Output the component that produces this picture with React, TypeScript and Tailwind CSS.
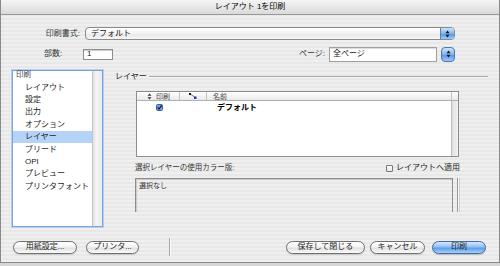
import React from "react";

function Arrows() {
  return (
    <svg width="5" height="8" viewBox="0 0 5 8">
      <path d="M0.5 3.2 L2.5 0.6 L4.5 3.2 Z" fill="#111" />
      <path d="M0.5 4.8 L2.5 7.4 L4.5 4.8 Z" fill="#111" />
    </svg>
  );
}

function Btn({ w, children, blue }: { w: string; children: React.ReactNode; blue?: boolean }) {
  return (
    <div
      className={
        blue
          ? "h-[13px] rounded-full border border-[#3f6aa3] bg-[linear-gradient(#d6e9fd,#90c0f5_45%,#5c9de9_55%,#a7d1fb)] flex items-center justify-center shadow-[0_1px_1px_rgba(0,0,0,0.2)] " + w
          : "h-[13px] rounded-full border border-[#6f6f6f] bg-[linear-gradient(#ffffff,#f4f4f4_45%,#e1e1e1_55%,#fbfbfb)] flex items-center justify-center shadow-[0_1px_1px_rgba(0,0,0,0.15)] " + w
      }
    >
      {children}
    </div>
  );
}

export default function App() {
  const items = ["レイアウト", "設定", "出力", "オプション", "レイヤー", "ブリード", "OPI", "プレビュー", "プリンタフォント"];
  return (
    <div className="w-[500px] h-[266px] bg-[#d6d6d6] font-['Liberation_Sans','Noto_Sans_CJK_JP',sans-serif] text-[8px] leading-none text-[#1c1c1c]">
      <div className="w-[500px] h-[263px] flex flex-col border-x border-b border-[#8a8a8a] bg-[repeating-linear-gradient(180deg,#efefef_0px,#efefef_2px,#e8e8e8_2px,#e8e8e8_4px)]">
        {/* title bar */}
        <div className="h-[15px] shrink-0 flex items-center justify-center border-b border-[#989898] bg-[linear-gradient(#f4f4f4,#dadada)] text-black">
          レイアウト 1を印刷
        </div>

        {/* row 1 */}
        <div className="flex items-center mt-[12px] h-[13px]">
          <div className="w-[79px] text-right text-[#333]">印刷書式:</div>
          <div className="ml-[5px] w-[370px] h-[13px] flex items-center rounded-[4px] border border-[#8a8a8a] bg-[linear-gradient(#ffffff,#f3f3f3_50%,#e6e6e6_51%,#f7f7f7)] overflow-hidden">
            <div className="flex-1 pl-[5px] text-[#111]">デフォルト</div>
            <div className="w-[14px] h-full border-l border-[#5a7fb2] bg-[linear-gradient(#cfe4fc,#7fb3f0_50%,#4f92e6_51%,#9fcbf8)] flex items-center justify-center">
              <Arrows />
            </div>
          </div>
        </div>

        {/* row 2 */}
        <div className="flex items-center mt-[6px] h-[16px]">
          <div className="ml-[43px] w-[39px] text-[#333]">部数:</div>
          <div className="w-[30px] h-[11px] border border-[#8c8c8c] bg-white pl-[3px] flex items-center shadow-[inset_0_1px_1px_rgba(0,0,0,0.2)]">1</div>
          <div className="flex-1" />
          <div className="text-[#333]">ページ:</div>
          <div className="ml-[4px] w-[108px] h-[15px] border border-[#a0a0a0] bg-white pl-[3px] pt-[2px] shadow-[inset_0_1px_1px_rgba(0,0,0,0.15)]">全ページ</div>
          <div className="ml-[4px] mr-[44px] w-[14px] h-[15px] rounded-[4px] border border-[#4f76ad] bg-[linear-gradient(#cfe4fc,#7fb3f0_50%,#4f92e6_51%,#9fcbf8)] flex items-center justify-center">
            <Arrows />
          </div>
        </div>

        {/* main */}
        <div className="flex mt-[8px] h-[157px]">
          {/* list */}
          <div className="ml-[11px] w-[91px] h-full border border-[#7aa3da] shadow-[0_0_0_1px_#b3cff2] flex bg-white">
            <div className="flex-1 flex flex-col -mt-[2px]">
              <div className="h-[12.4px] flex items-center pl-[3px] text-[7.5px] text-[#444]">印刷</div>
              {items.map((t) => (
                <div
                  key={t}
                  className={
                    t === "レイヤー"
                      ? "h-[12.4px] flex items-center pl-[12px] bg-[#b5d3f7]"
                      : "h-[12.4px] flex items-center pl-[12px]"
                  }
                >
                  {t}
                </div>
              ))}
            </div>
            <div className="w-[10px] h-full border-l border-[#c4c4c4] bg-[linear-gradient(90deg,#e2e2e2,#f4f4f4_40%,#ebebeb)]" />
          </div>

          {/* right panel */}
          <div className="ml-[12px] mr-[11px] flex-1 flex flex-col">
            <div className="h-[11px] mt-[1px] flex items-center">
              <div>レイヤー</div>
              <div className="flex-1 ml-[2px] h-[2px] border-t border-[#a6a6a6] border-b border-b-[#fafafa]" />
            </div>

            {/* table */}
            <div className="mt-[9px] ml-[21px] w-[323px] h-[66px] border border-[#8c8c8c] bg-white flex flex-col">
              <div className="h-[9px] shrink-0 flex border-b border-[#b0b0b0] bg-[linear-gradient(#ffffff,#e9e9e9)] text-[7px] text-[#444]">
                <div className="w-[43px] border-r border-[#c4c4c4] flex items-center pl-[10px]">
                  <svg width="5" height="7" viewBox="0 0 5 7">
                    <path d="M0.5 2.8 L2.5 0.4 L4.5 2.8 Z" fill="#333" />
                    <path d="M0.5 4.2 L2.5 6.6 L4.5 4.2 Z" fill="#333" />
                  </svg>
                  <span className="ml-[4px]">印刷</span>
                </div>
                <div className="w-[27px] border-r border-[#c4c4c4] flex items-center pl-[9px]">
                  <svg width="8" height="6" viewBox="0 0 8 6">
                    <rect x="0" y="0" width="2" height="2" fill="#111" />
                    <path d="M2 1.5 L5.5 4" stroke="#555" strokeWidth="0.8" />
                    <rect x="5" y="3.5" width="2.5" height="2.5" fill="#2233cc" />
                  </svg>
                </div>
                <div className="flex-1 flex items-center pl-[6px]">名前</div>
                <div className="w-[7px] border-l border-[#c4c4c4]" />
              </div>
              <div className="flex-1 flex">
                <div className="flex-1">
                  <div className="flex items-center h-[11px] mt-[1px]">
                    <svg className="ml-[19px]" width="7" height="7" viewBox="0 0 7 7">
                      <rect x="0.5" y="0.5" width="6" height="6" rx="1" fill="#6fa3e6" stroke="#3e5f9a" />
                      <path d="M1.6 3.4 L3 5 L5.6 1.4" stroke="#0d1a33" strokeWidth="1.2" fill="none" />
                    </svg>
                    <div className="ml-[54px] font-bold text-black">デフォルト</div>
                  </div>
                </div>
                <div className="w-[7px] border-l border-[#bdbdbd] bg-[linear-gradient(90deg,#e0e0e0,#f2f2f2)]" />
              </div>
            </div>

            {/* color plates label */}
            <div className="mt-[6px] h-[10px] ml-[20px] mr-[28px] flex items-center text-[7.5px] text-[#333]">
              <div className="flex-1">選択レイヤーの使用カラー版:</div>
              <div className="w-[7px] h-[7px] border border-[#777] rounded-[1px] bg-[linear-gradient(#ffffff,#e4e4e4)] mr-[3px]" />
              <div className="text-[8px] text-[#1c1c1c]">レイアウトへ適用</div>
            </div>

            {/* plates box */}
            <div className="mt-[5px] ml-[20px] flex h-[34px]">
              <div className="w-[318px] h-full border border-b-0 border-[#8c8c8c] shadow-[inset_1px_1px_1px_rgba(0,0,0,0.15)] pl-[3px] pt-[3px] text-[7px] text-[#333]">
                選択なし
              </div>
              <div className="ml-[4px] w-[3px] h-full border-x border-l-[#9a9a9a] border-r-[#d0d0d0] bg-[#f4f4f4]" />
            </div>
          </div>
        </div>

        {/* bottom buttons */}
        <div className="flex items-center mt-[11px] h-[18px]">
          <div className="ml-[12px]">
            <Btn w="w-[64px]">用紙設定...</Btn>
          </div>
          <div className="ml-[9px]">
            <Btn w="w-[53px]">プリンタ...</Btn>
          </div>
          <div className="ml-[30px] w-[2px] h-[18px] border-l border-[#a8a8a8] border-r border-r-[#fafafa]" />
          <div className="flex-1" />
          <Btn w="w-[79px]">保存して閉じる</Btn>
          <div className="ml-[5px]">
            <Btn w="w-[55px]">キャンセル</Btn>
          </div>
          <div className="ml-[7px] mr-[13px]">
            <Btn w="w-[54px]" blue>
              印刷
            </Btn>
          </div>
        </div>
      </div>
    </div>
  );
}
